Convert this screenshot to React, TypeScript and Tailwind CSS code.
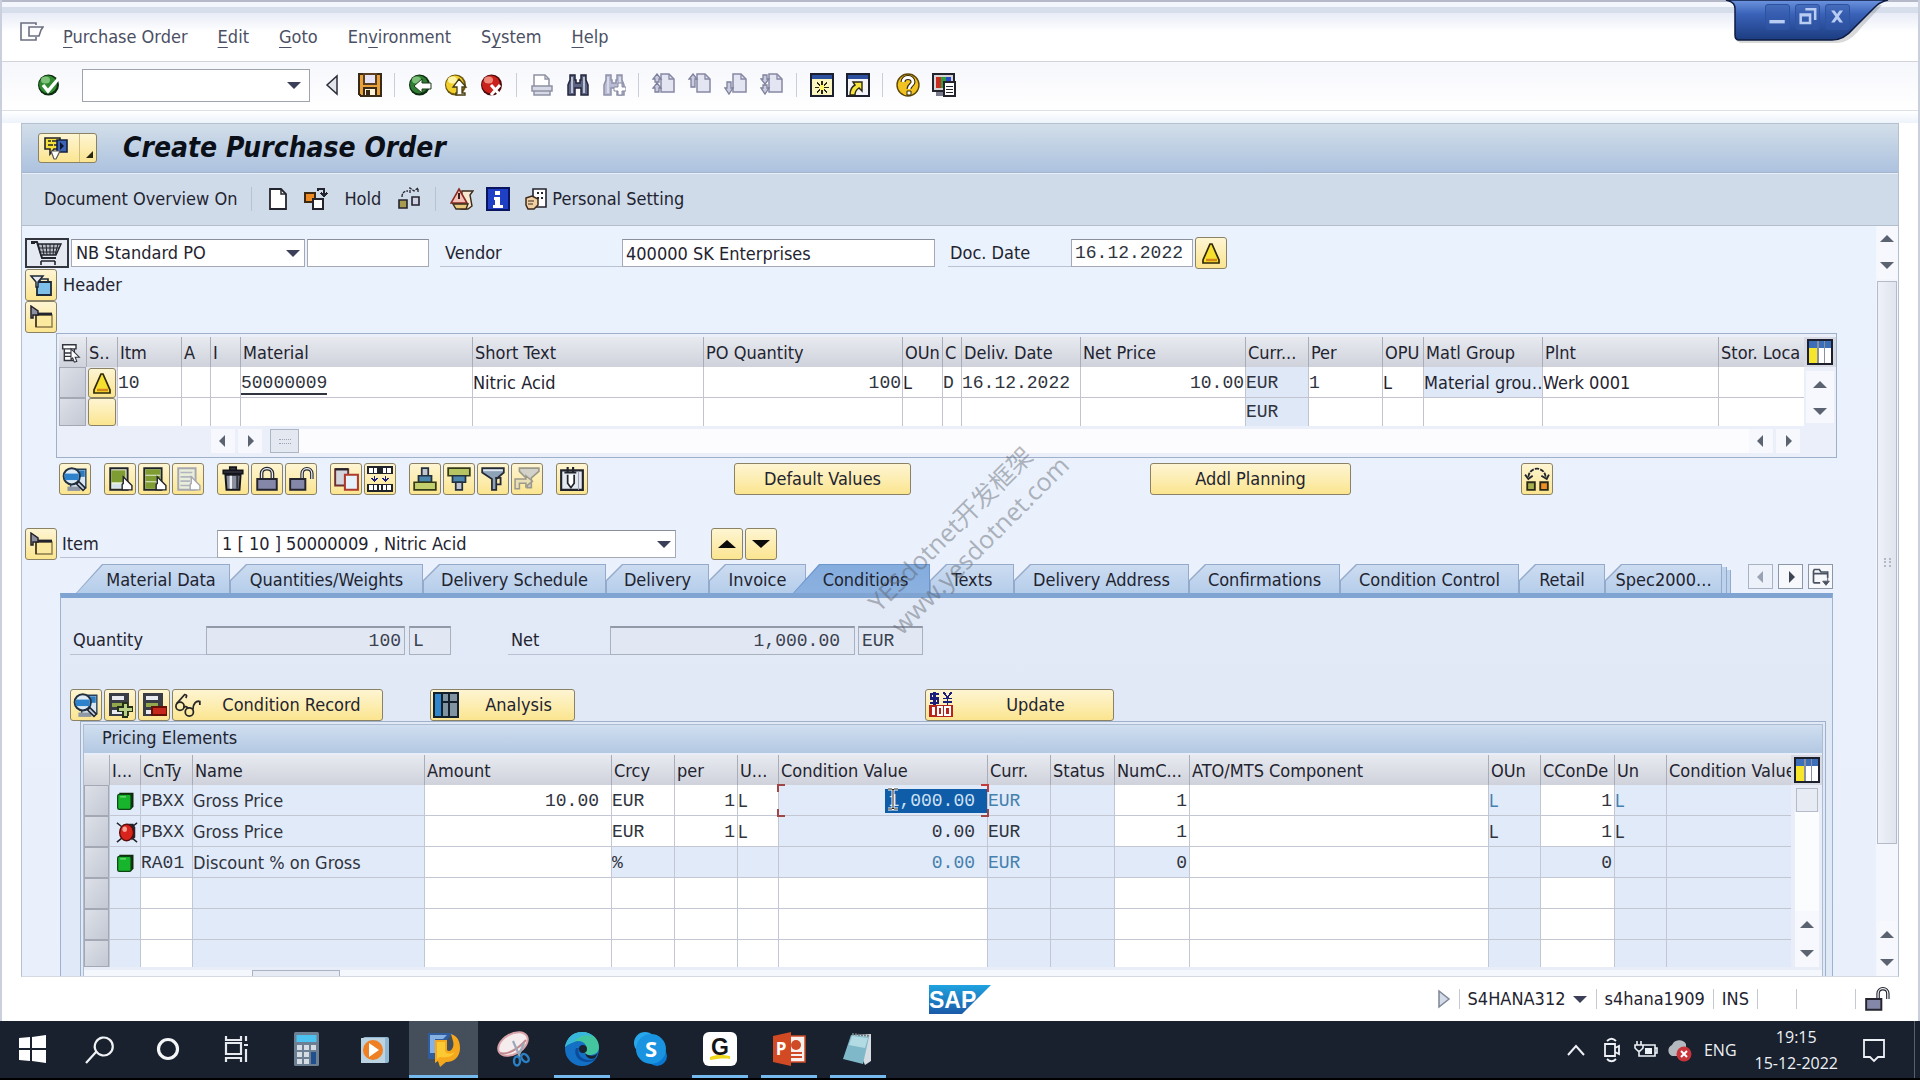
import React from "react";

type Kids = { children?: React.ReactNode };

/* ---------- drawing helpers ---------- */

function Ic({ s = 24, crisp = false, children }: Kids & { s?: number; crisp?: boolean }) {
  return (
    <svg width={s} height={s} viewBox="0 0 24 24" fill="none" shapeRendering={crisp ? "crispEdges" : "auto"} aria-hidden="true" className="block shrink-0">
      {children}
    </svg>
  );
}

function Orb({ base, hi, dark, children }: Kids & { base: string; hi: string; dark: string }) {
  return (
    <Ic>
      <circle cx="11.5" cy="12" r="10.5" fill={dark} />
      <circle cx="11" cy="11.5" r="9" fill={base} />
      <ellipse cx="8.5" cy="7" rx="4.5" ry="3.5" fill={hi} />
      {children}
    </Ic>
  );
}

const ExitDocIcon = () => (
  <Ic>
    <path d="M16 4V2H1v17h15v-3" stroke="#6b6f80" strokeWidth="1.6" />
    <path d="M9 6h14l-2 3-2 6H9z" stroke="#6b6f80" strokeWidth="1.6" />
  </Ic>
);
const OkIcon = () => (
  <Orb base="#2f8a2f" hi="#7fc37a" dark="#0c2b10">
    <path d="M6 12l5 6L22 5" stroke="#fff" strokeWidth="3.4" />
  </Orb>
);
const SaveIcon = () => (
  <Ic crisp>
    <path d="M1 1h22v22H3l-2-2z" fill="#e9a23b" stroke="#3a2a18" strokeWidth="1.6" />
    <path d="M6 1h12v10H6z" fill="#e6e3f7" stroke="#5a4020" strokeWidth="1.4" />
    <path d="M6 15h12v8H6z" fill="#fff4d8" stroke="#3a2a18" strokeWidth="1.4" />
    <path d="M8 17h4v6H8z" fill="#3a2a18" />
  </Ic>
);
const BackIcon = () => (
  <Orb base="#2f7d33" hi="#7cbf78" dark="#0c2b10">
    <path d="M6 13l8-7v4h9v6h-9v4z" fill="#fff" stroke="#1b3a1b" strokeWidth="1" />
  </Orb>
);
const UpIcon = () => (
  <Orb base="#f3cf2c" hi="#fff3a8" dark="#6a5510">
    <path d="M15 6l7 8h-4v6h3v2h-9v-2h1v-6H9z" fill="#fff" stroke="#443a10" strokeWidth="1.3" />
  </Orb>
);
const CancelIcon = () => (
  <Orb base="#c9211c" hi="#f0877b" dark="#4d0a0a">
    <path d="M11 12l9 10M20 12l-9 10" stroke="#fff" strokeWidth="3" />
  </Orb>
);
const PrintIcon = () => (
  <Ic>
    <path d="M4 13V2h11l4 4v7" fill="#fff" stroke="#8f91a3" strokeWidth="1.5" />
    <path d="M15 2v4h4" stroke="#8f91a3" strokeWidth="1.3" />
    <path d="M2 13h20v5H2zM4 18h16v4H4z" fill="#d6d8e6" stroke="#8f91a3" strokeWidth="1.5" />
  </Ic>
);
const Binoc = ({ a, b }: { a: string; b: string }) => (
  <g>
    <path d="M4 2h5v5h1v3h4V7h1V2h5v5l2 5v10h-7v-7h-6v7H2V12l2-5z" fill={a} stroke={b} strokeWidth="1.5" />
    <path d="M6 4v16M18 4v16" stroke="#e6e9f6" strokeWidth="1.4" />
  </g>
);
const FindIcon = () => <Ic><Binoc a="#5c6484" b="#23263c" /></Ic>;
const FindNextIcon = () => (
  <Ic>
    <Binoc a="#b9bcd2" b="#8e91a8" />
    <path d="M16 10h4v4h4v4h-4v4h-4v-4h-4v-4h4z" fill="#fff" stroke="#8486a0" strokeWidth="1" />
  </Ic>
);
function PageIcon({ arrows }: { arrows: string }) {
  return (
    <Ic>
      <path d="M9 1h8l5 5v13H9z" fill="#e4e5f3" stroke="#8688a4" strokeWidth="1.5" />
      <path d="M17 1v5h5" stroke="#8688a4" strokeWidth="1.3" />
      <path d={arrows} fill="#c9cbe0" stroke="#7f819c" strokeWidth="1.3" />
    </Ic>
  );
}
const SessionIcon = () => (
  <Ic crisp>
    <path d="M1 1h22v22H1z" fill="#fbf6c0" stroke="#1c1f2e" strokeWidth="2" />
    <path d="M2 2h20v4H2z" fill="#2c4f9e" />
    <path d="M12 8v13M5 14.500h14M7 9.500l10 10M17 9.500l-10 10" stroke="#2a2614" strokeWidth="1.300" />
    <circle cx="12" cy="14.500" r="2.500" fill="#fff56a" />
  </Ic>
);
const ShortcutIcon = () => (
  <Ic>
    <path d="M1 1h22v22H1z" fill="#f3f3f8" stroke="#1c1f2e" strokeWidth="2" />
    <path d="M2 2h20v4H2z" fill="#2c4f9e" />
    <path d="M4 22c0-5 1-8 5-10L7 9h9v9l-3-3c-3 2-4 4-4 7z" fill="#f5e33e" stroke="#2a2614" strokeWidth="1.4" />
  </Ic>
);
const HelpIcon = () => (
  <Ic>
    <circle cx="12" cy="12" r="11" fill="#f2c320" stroke="#5d4708" strokeWidth="1.4" />
    <path d="M7 9c0-6 10-6 10 0 0 3-4 3-4 7" stroke="#33280a" strokeWidth="5" />
    <path d="M7 9c0-6 10-6 10 0 0 3-4 3-4 7" stroke="#fff" strokeWidth="2.800" />
    <path d="M11 18h4v4h-4z" fill="#fff" stroke="#33280a" strokeWidth="1" />
  </Ic>
);
const LayoutIcon = () => (
  <Ic crisp>
    <path d="M1 1h21v17H1z" fill="#d5d5d5" stroke="#23232d" strokeWidth="2" />
    <path d="M4 4h5v11H4z" fill="#c92d22" /><path d="M9 4h5v11H9z" fill="#2f9e3d" /><path d="M14 4h5v11h-5z" fill="#2c46c8" />
    <path d="M4 19h12v4H4z" fill="#777b8c" />
    <path d="M12 9h11v14H12z" fill="#fff" stroke="#23232d" strokeWidth="1.500" />
    <path d="M14 13h7M14 16h7M14 19h7" stroke="#23232d" />
  </Ic>
);
const ServicesIcon = () => (
  <svg width="28" height="24" viewBox="0 0 28 24" aria-hidden="true" className="block">
    <path d="M2 2h15v11h-6l-4 5v-5H2z" fill="#f5e13c" stroke="#23232d" strokeWidth="1.600" />
    <path d="M5 5h3M9 5h5M5 9h5M11 9h3" stroke="#23232d" strokeWidth="1.600" />
    <path d="M14 4h10v12H14z" fill="#3c62b4" stroke="#15203f" strokeWidth="1.600" />
    <path d="M17 6l4 4-4 4z" fill="#0b1530" />
    <path d="M8 15h9l-4 8h-2z" fill="#fff" stroke="#555" strokeWidth="1.200" />
  </svg>
);
const NewDocIcon = () => (
  <Ic>
    <path d="M4 2h11l5 5v15H4z" fill="#fff" stroke="#24242e" strokeWidth="1.8" />
    <path d="M15 2v5h5" stroke="#24242e" strokeWidth="1.500" />
  </Ic>
);
const OtherPoIcon = () => (
  <Ic crisp>
    <path d="M1 6h10v9H1z" fill="#e98a25" stroke="#3d2812" strokeWidth="1.600" />
    <path d="M9 12h10v10H9z" fill="#fff" stroke="#24242e" strokeWidth="1.800" />
    <path d="M14 4V2h6v6M17 6l3 3 3-3" stroke="#24242e" strokeWidth="1.500" />
  </Ic>
);
const CheckConnIcon = () => (
  <Ic>
    <path d="M2 13h8v8H2z" fill="#a79b4f" stroke="#24242e" strokeWidth="1.600" />
    <path d="M15 10h7v8h-7z" fill="#cfd2e3" stroke="#24242e" strokeWidth="1.600" />
    <path d="M5 10c0-4 2-6 6-6M13 6V1l4 3 4-3v5" stroke="#24242e" strokeWidth="1.300" strokeDasharray="3 1" />
  </Ic>
);
const MessagesIcon = () => (
  <Ic>
    <path d="M12 4h11l-3 4 2 11-4 3h-7z" fill="#f6ead2" stroke="#3d2a1b" strokeWidth="1.400" />
    <path d="M9 2l8 14H1z" fill="#f5c1b8" stroke="#8a2a22" strokeWidth="1.600" />
    <path d="M9 6v6" stroke="#31201b" strokeWidth="2" />
    <path d="M3 17h15l-2 5H6z" fill="#e8c97e" stroke="#3d2a1b" strokeWidth="1.400" />
  </Ic>
);
const InfoIcon = () => (
  <Ic crisp>
    <path d="M1 1h22v22H1z" fill="#1f3fc4" stroke="#0a1560" strokeWidth="2" />
    <path d="M9 4h5v4H9zM8 10h6v8h3v3H7v-3h2v-5H8z" fill="#fff" />
  </Ic>
);
const PersonalIcon = () => (
  <Ic>
    <path d="M9 2h13v18H9z" fill="#fff" stroke="#24242e" strokeWidth="1.600" />
    <path d="M13 6h2M17 6h2M13 11h2M17 11h2" stroke="#24242e" strokeWidth="2" />
    <path d="M2 11l6-2 6 3v6l-4 4H4l-2-4z" fill="#f0cfa2" stroke="#3d2a1b" strokeWidth="1.500" />
    <path d="M4 14h6M4 17h5" stroke="#3d2a1b" />
  </Ic>
);
const CartIcon = () => (
  <svg width="34" height="26" viewBox="0 0 34 26" fill="none" aria-hidden="true" className="block">
    <path d="M2 2h5l5 16h14" stroke="#22242c" strokeWidth="2" />
    <path d="M8 4h23l-5 11H11z" fill="#b9bcc6" stroke="#22242c" strokeWidth="1.400" />
    <path d="M12 4l2 11M16 4l1 11M20 4v11M24 4l-1 11M28 4l-3 11M9 8h20M10 12h18" stroke="#22242c" />
    <path d="M11 21h14M11 21v4M25 21v4" stroke="#22242c" strokeWidth="1.600" />
    <path d="M1 1h4v3H1z" fill="#22242c" />
  </svg>
);
const HeaderOpenIcon = () => (
  <Ic>
    <path d="M8 9h14v13H8z" fill="#7fc0ea" stroke="#1d2a3a" strokeWidth="1.800" />
    <path d="M11 9V6h8v3" stroke="#1d2a3a" strokeWidth="1.600" />
    <path d="M2 3h12l-5 6v5H7V9z" fill="#e9e9ef" stroke="#1d2a3a" strokeWidth="1.500" />
  </Ic>
);
const FolderClosedIcon = () => (
  <Ic>
    <path d="M7 10h16v12H7z" fill="#fbe9a0" stroke="#8a7a4a" strokeWidth="1.400" />
    <path d="M7 22V9" stroke="#3b3320" strokeWidth="1.600" />
    <path d="M7 9h16" stroke="#23232d" strokeWidth="2.800" />
    <path d="M2 1l7 5v4H4v3H2z" fill="#8d909e" stroke="#23232d" strokeWidth="1.500" />
  </Ic>
);
const WarnIcon = () => (
  <Ic>
    <path d="M11 3h2l7 16v3H4v-3z" fill="#f7e02d" stroke="#2e2708" strokeWidth="1.700" />
    <path d="M7 19h11" stroke="#d5861a" strokeWidth="2.500" />
  </Ic>
);
const SelectAllIcon = () => (
  <Ic s={20}>
    <path d="M2 2h16v5H2zM4 7h12v14H4zM4 12h12M4 16h12" stroke="#32343f" strokeWidth="1.700" fill="#fff" />
    <path d="M12 7l10 10h-5l2 5-3 1-2-5-2 2z" fill="#fff" stroke="#32343f" strokeWidth="1.300" />
  </Ic>
);
const DetailIcon = () => (
  <Ic s={26}>
    <path d="M8 3h14v17H8z" fill="#d8e6f2" stroke="#27405c" strokeWidth="1.300" />
    <path d="M12 4h9v6h-9z" fill="#2b7bbf" />
    <path d="M5 19h12v4H5z" fill="#8e97a5" />
    <circle cx="9" cy="9.500" r="7.500" fill="#dceaf6" stroke="#23303f" strokeWidth="1.800" />
    <path d="M2.500 7h13v6h-13z" fill="#2d82cb" />
    <path d="M14 15l7 7" stroke="#1f2430" strokeWidth="4.500" />
    <path d="M15 16l5 5" stroke="#c6d8e8" strokeWidth="1.600" />
  </Ic>
);
const SheetIcon = ({ mode }: { mode: "one" | "many" | "off" }) => (
  <Ic s={26}>
    <path d="M3 2h16v20H3z" fill="#e9eeda" stroke={mode === "off" ? "#a6a7b0" : "#22242c"} strokeWidth="1.800" />
    {mode === "one" && <path d="M4 4h13v11H4z" fill="#7f9c33" />}
    {mode === "one" && <path d="M5 17h8v3H5z" fill="#cfe0f0" />}
    {mode === "many" && <path d="M4 3h14v5H4zM4 9h14v5H4zM4 15h10v6H4z" fill="#7f9c33" />}
    {mode === "off" && <path d="M5 6h11M5 10h11M5 14h9M5 18h9" stroke="#b3b5be" strokeWidth="1.500" />}
    <path d="M15 10l8 8v4h-9v-5l1-1z" fill="#fff" stroke={mode === "off" ? "#a6a7b0" : "#22242c"} strokeWidth="1.300" />
  </Ic>
);
const TrashIcon = () => (
  <Ic s={26}>
    <path d="M3 4h18v3H3zM9 1h6v3H9z" fill="#33353f" stroke="#15161c" strokeWidth="1.500" />
    <path d="M5 8h14l-1 14H6z" fill="#8b8e9d" stroke="#15161c" strokeWidth="1.800" />
    <path d="M10 9v12" stroke="#eceef5" strokeWidth="2.200" />
    <path d="M16 9v12" stroke="#33353f" strokeWidth="2" />
  </Ic>
);
const LockIcon = () => (
  <Ic s={26}>
    <path d="M7 12V7c0-6 10-6 10 0v5" stroke="#24252e" strokeWidth="3.400" />
    <path d="M7 12V7c0-6 10-6 10 0v5" stroke="#eceef5" strokeWidth="1.200" />
    <path d="M3 12h18v10H3z" fill="#8587a8" stroke="#24252e" strokeWidth="1.800" />
  </Ic>
);
const UnlockIcon = ({ s = 26 }: { s?: number }) => (
  <Ic s={s}>
    <path d="M13 12V7c0-6 9-6 9 0v5" stroke="#24252e" strokeWidth="3.200" />
    <path d="M13 12V7c0-6 9-6 9 0v5" stroke="#eceef5" strokeWidth="1.200" />
    <path d="M2 12h14v10H2z" fill="#8587a8" stroke="#24252e" strokeWidth="1.800" />
  </Ic>
);
const CopyIcon = () => (
  <Ic s={26}>
    <path d="M2 3h12v15H2z" fill="#d3d4dd" stroke="#6d3030" strokeWidth="1.800" />
    <path d="M2 3h12" stroke="#23232d" strokeWidth="2" />
    <path d="M11 8h12v14H11z" fill="#e6f2fb" stroke="#b03a2c" strokeWidth="1.900" />
  </Ic>
);
const BarsIcon = () => (
  <Ic s={26} crisp>
    <path d="M1 1h22v6H1zM1 17h22v6H1z" fill="#fff" stroke="#22242c" strokeWidth="1.600" />
    <path d="M6 1v6M18 1v6M6 17v6M10 17v6M14 17v6M18 17v6" stroke="#22242c" strokeWidth="1.600" />
    <path d="M9 1h6v6H9z" fill="#22242c" />
    <path d="M7 9v5M4 11l3 3 3-3M17 9v5M14 11l3 3 3-3" stroke="#1b1f7a" strokeWidth="1.600" />
  </Ic>
);
const SortAscIcon = () => (
  <Ic s={26}>
    <path d="M9 2h6v7H9z" fill="#c2c5d0" stroke="#23303f" strokeWidth="1.600" />
    <path d="M6 9h12v6H6z" fill="#4c86ac" stroke="#23303f" strokeWidth="1.600" />
    <path d="M2 15h20v7H2z" fill="#c3cf6d" stroke="#353b18" strokeWidth="1.600" />
  </Ic>
);
const SortDescIcon = () => (
  <Ic s={26}>
    <path d="M2 2h20v7H2z" fill="#b7c463" stroke="#353b18" strokeWidth="1.600" />
    <path d="M6 9h12v6H6z" fill="#4c86ac" stroke="#23303f" strokeWidth="1.600" />
    <path d="M9 15h6v7H9z" fill="#c2c5d0" stroke="#23303f" strokeWidth="1.600" />
  </Ic>
);
const FilterIcon = () => (
  <Ic s={26}>
    <path d="M2 2h20v4l-7 6v10h-4V12L2 6z" fill="#8fa3b8" stroke="#262a36" strokeWidth="1.600" />
    <path d="M3 4h18" stroke="#dfe6ee" strokeWidth="1.500" />
    <path d="M14 11h5v6h-4" stroke="#262a36" strokeWidth="1.700" />
  </Ic>
);
const FilterOffIcon = () => (
  <Ic s={26}>
    <path d="M5 2h18v3l-7 6v9h-4v-8L5 5z" fill="#d3d2c8" stroke="#9b998c" strokeWidth="1.500" />
    <path d="M1 12h10v-3l6 5-6 5v-3H5v5H1z" fill="#e8dfb6" stroke="#9b998c" strokeWidth="1.400" />
  </Ic>
);
const ClipIcon = () => (
  <Ic s={26}>
    <path d="M2 4h20v18H2z" fill="#e4e8f0" stroke="#22242c" strokeWidth="2" />
    <path d="M8 1v6M13 1v6M5 6h11" stroke="#22242c" strokeWidth="2" />
    <path d="M8 8v8l3 4 3-4V8" fill="#fff" stroke="#22242c" strokeWidth="1.600" />
    <path d="M18 5v17" stroke="#9aa0b4" />
  </Ic>
);
const ArcIcon = () => (
  <Ic s={26}>
    <path d="M3 15h7v7H3z" fill="#a8b04c" stroke="#2a2a18" strokeWidth="1.700" />
    <path d="M15 15h7v7h-7z" fill="#ef9023" stroke="#2a2a18" strokeWidth="1.700" />
    <path d="M4 10C5 0 19 0 20 10" stroke="#22242c" strokeWidth="1.700" strokeDasharray="4 1" />
    <path d="M1 8l3 4 4-3M16 9l5 3 2-4" stroke="#22242c" strokeWidth="1.700" />
  </Ic>
);
const RowPlusIcon = ({ minus = false }: { minus?: boolean }) => (
  <Ic s={26} crisp>
    <path d="M2 1h18v21H2z" fill="#3a3c46" />
    <path d="M5 4h11v3H5zM5 17h11v3H5z" fill="#e8eaf0" />
    <path d="M5 10h11v4H5z" fill="#93a84c" />
    {minus ? (
      <path d="M10 14h14v7H10z" fill="#c5271d" stroke="#641009" strokeWidth="1.400" />
    ) : (
      <path d="M15 10h4v4h5v4h-5v5h-4v-5h-5v-4h5z" fill="#b9cf86" stroke="#23301a" strokeWidth="1.400" />
    )}
  </Ic>
);
const GlassesIcon = () => (
  <Ic s={28}>
    <circle cx="6" cy="13" r="3.500" stroke="#262626" strokeWidth="1.500" />
    <circle cx="14" cy="18" r="3.500" stroke="#262626" strokeWidth="1.500" />
    <path d="M3 11l7-8c2 0 2 1 1 3M9 14c1-1 3-1 4 1M17 16c0-5 3-8 6-7v3" stroke="#262626" strokeWidth="1.500" />
  </Ic>
);
const AnalysisIcon = () => (
  <Ic s={26} crisp>
    <path d="M1 1h22v22H1z" fill="#7f93a0" stroke="#14202c" strokeWidth="2" />
    <path d="M2 2h6v20H2z" fill="#2f86cd" />
    <path d="M8 1v22M15 1v22M8 9h15" stroke="#14202c" strokeWidth="1.800" />
  </Ic>
);
const UpdateIcon = () => (
  <Ic s={26} crisp>
    <path d="M1 12h22v11H1z" fill="#b8231c" />
    <path d="M5 14v7M9 14h4v7H9zM16 14h4v7h-4z" stroke="#fff" strokeWidth="2" />
    <path d="M10 2H3v4h6v4H2M6 0v12" stroke="#1b1f7a" strokeWidth="2" />
    <path d="M14 0l4 5 4-5M18 5v7M14 6h8M14 9h8" stroke="#1b1f7a" strokeWidth="1.800" />
  </Ic>
);
const ConfigIcon = () => (
  <Ic s={26} crisp>
    <path d="M1 1h22v22H1z" fill="#fff" stroke="#1c1f2e" strokeWidth="2" />
    <path d="M2 2h20v6H2z" fill="#3c6fb8" />
    <path d="M2 8h7v14H2z" fill="#f7e52c" />
    <path d="M10 2v20M16 2v20" stroke="#8a909e" strokeWidth="1.500" />
  </Ic>
);
const ListBtnIcon = () => (
  <Ic s={20}>
    <path d="M3 19V5l1-2h6l2 3h8v7" stroke="#4a5160" strokeWidth="2" />
    <path d="M3 8h17M3 19h8" stroke="#4a5160" strokeWidth="2" />
    <path d="M20 12v5M14 17h8l-4 5z" fill="#4a5160" stroke="#4a5160" />
  </Ic>
);
const GreenBox = () => (
  <Ic s={20}>
    <path d="M4 2h17v17l-3 3H4z" fill="#12290f" />
    <rect x="2" y="4" width="16" height="18" rx="2" fill="#17b52b" stroke="#0c4513" strokeWidth="1.500" />
    <path d="M5 7h7" stroke="#5fd468" strokeWidth="2" />
  </Ic>
);
const RedFlash = () => (
  <Ic s={22}>
    <path d="M1 2l5 4M23 2l-5 4M1 23l5-4M23 23l-5-4" stroke="#22242c" strokeWidth="1.600" />
    <path d="M12 3h7l2 4v11l-4 3z" fill="#22242c" />
    <ellipse cx="11.500" cy="12.500" rx="7.500" ry="9" fill="#d8241c" stroke="#5b0d0a" strokeWidth="1.500" />
    <ellipse cx="9.500" cy="9" rx="2.500" ry="3" fill="#f7a195" />
  </Ic>
);

type Dir = "up" | "down" | "left" | "right";
const dirPath: Record<Dir, string> = { up: "M1 10h14L8 3z", down: "M1 4h14L8 11z", left: "M10 1v12L4 7z", right: "M6 1v12l6-6z" };
const Tri = ({ d, c = "#5b6370" }: { d: Dir; c?: string }) => (
  <svg width="16" height="14" viewBox="0 0 16 14" aria-hidden="true" className="block shrink-0"><path d={dirPath[d]} fill={c} /></svg>
);

/* ---------- controls ---------- */

function YBtn({ label, className = "w-8", children }: Kids & { label?: string; className?: string }) {
  return (
    <button type="button" aria-label={label} className={`flex h-8 shrink-0 items-center justify-center rounded-[3px] border border-[#8b8266] bg-linear-to-b from-[#fef5d2] to-[#fbe58f] ${className}`}>
      {children}
    </button>
  );
}
function ArrowBtn({ d, label, className = "h-6 w-6" }: { d: Dir; label: string; className?: string }) {
  return <button type="button" aria-label={label} className={`flex shrink-0 items-center justify-center bg-[#f6f8fd] ${className}`}><Tri d={d} /></button>;
}
function IconBtn({ label, children }: Kids & { label: string }) {
  return <button type="button" aria-label={label} className="shrink-0">{children}</button>;
}
const Sep = () => <span className="mr-px h-6 w-px bg-[#c9ced8]" />;
function Combo({ id, label, value, className }: { id: string; label: string; value: string; className: string }) {
  return (
    <span className={`relative shrink-0 ${className}`}>
      <select id={id} aria-label={label} className="h-full w-full appearance-none border border-[#a4a9b4] border-t-[#8a8f9b] bg-white pl-1 outline-none">
        <option>{value}</option>
      </select>
      <span className="pointer-events-none absolute top-1/2 right-1 -translate-y-1/2"><Tri d="down" c="#3b4058" /></span>
    </span>
  );
}
const field = "h-7 shrink-0 border border-[#a4a9b4] border-t-[#8a8f9b] bg-white px-[3px] outline-none";
const roField = "h-[29px] shrink-0 border border-[#a9b1bf] border-t-2 border-t-[#9299a8] bg-[#e2e8f3] px-[3px] outline-none font-['Liberation_Mono',monospace] text-[18px] text-[#3a4150]";
const mono = "font-['Liberation_Mono',monospace] text-[18px] text-[#30343e]";
const under = "flex shrink-0 items-center border-b border-[#b9c2d2]";

/* ---------- data ---------- */

const menus: [string, string, string][] = [["", "P", "urchase Order"], ["", "E", "dit"], ["", "G", "oto"], ["En", "v", "ironment"], ["S", "y", "stem"], ["", "H", "elp"]];

const itemCols: [string, string][] = [
  ["w-[27px]", ""], ["w-[31px]", "S.."], ["w-[64px]", "Itm"], ["w-[29px]", "A"], ["w-[30px]", "I"], ["w-[232px]", "Material"], ["w-[231px]", "Short Text"],
  ["w-[199px]", "PO Quantity"], ["w-[40px]", "OUn"], ["w-[19px]", "C"], ["w-[119px]", "Deliv. Date"], ["w-[165px]", "Net Price"], ["w-[63px]", "Curr..."],
  ["w-[74px]", "Per"], ["w-[41px]", "OPU"], ["w-[119px]", "Matl Group"], ["w-[176px]", "Plnt"], ["", "Stor. Loca"],
];
const itemRows: string[][] = [
  ["", "", "10", "", "", "50000009", "Nitric Acid", "100", "L", "D", "16.12.2022", "10.00", "EUR", "1", "L", "Material grou…", "Werk 0001", ""],
  ["", "", "", "", "", "", "", "", "", "", "", "", "EUR", "", "", "", "", ""],
];
const itemMono = [2, 5, 7, 9, 10, 11, 12, 13];

const condCols: [string, string][] = [
  ["w-[25px]", ""], ["w-[31px]", "I..."], ["w-[52px]", "CnTy"], ["w-[232px]", "Name"], ["w-[187px]", "Amount"], ["w-[63px]", "Crcy"], ["w-[63px]", "per"],
  ["w-[41px]", "U..."], ["w-[209px]", "Condition Value"], ["w-[63px]", "Curr."], ["w-[64px]", "Status"], ["w-[75px]", "NumC..."], ["w-[299px]", "ATO/MTS Component"],
  ["w-[52px]", "OUn"], ["w-[74px]", "CConDe"], ["w-[52px]", "Un"], ["", "Condition Value"],
];
const condRows: string[][] = [
  ["", "ok", "PBXX", "Gross Price", "10.00", "EUR", "1", "L", "1,000.00", "EUR", "", "1", "", "L", "1", "L", ""],
  ["", "bad", "PBXX", "Gross Price", "", "EUR", "1", "L", "0.00", "EUR", "", "1", "", "L", "1", "L", ""],
  ["", "ok", "RA01", "Discount % on Gross", "", "%", "", "", "0.00", "EUR", "", "0", "", "", "0", "", ""],
  Array(17).fill(""), Array(17).fill(""), Array(17).fill(""),
];
const condMono = [2, 4, 5, 6, 8, 9, 11, 14];
const condRight = [4, 6, 8, 11, 14];

function condShaded(r: number, c: number) {
  if ([1, 3, 9, 10, 13, 15, 16].includes(c)) return true;
  if (r < 3 && [2, 8].includes(c)) return true;
  return r === 2 && [5, 6, 7, 11, 14].includes(c);
}

const tabs: [string, string][] = [
  ["w-[154px]", "Material Data"], ["w-[193px]", "Quantities/Weights"], ["w-[183px]", "Delivery Schedule"], ["w-[103px]", "Delivery"], ["w-[97px]", "Invoice"],
  ["w-[137px]", "Conditions"], ["w-[84px]", "Texts"], ["w-[175px]", "Delivery Address"], ["w-[151px]", "Confirmations"], ["w-[179px]", "Condition Control"],
  ["w-[86px]", "Retail"], ["w-[117px]", "Spec2000..."],
];

/* ---------- sections ---------- */

function WindowControls() {
  return (
    <div className="absolute top-0 right-6 h-11 w-[170px]">
      <svg width="170" height="44" viewBox="0 0 170 44" fill="none" aria-hidden="true" className="absolute inset-0">
        <defs>
          <linearGradient id="wc" x1="0" y1="0" x2="0" y2="1"><stop offset="0" stopColor="#6d95df" /><stop offset=".35" stopColor="#3a62b8" /><stop offset="1" stopColor="#1c3c80" /></linearGradient>
        </defs>
        <path d="M8 2c4 2 4 6 4 8v26c0 5 2 7 6 7h94c10 0 18-6 24-14l22-24z" fill="#00000026" />
        <path d="M2 0c8 2 9 5 9 9v26c0 3 1 5 4 5h93c10 0 16-5 21-11l22-22c4-4 8-6 13-7z" fill="url(#wc)" stroke="#0d1b40" strokeWidth="1.500" />
      </svg>
      <div className="absolute top-1 left-[41px] flex gap-[5px]">
        {["M4 17h18v4H4z", "M11 3h13v14h-3V6H11zM4 9h14v13H4zm3 4v6h8v-6z", "M6 6h4l3 4 3-4h4l-5 7 5 7h-4l-3-4-3 4H6l5-7z"].map((d, i) => (
          <button key={i} type="button" aria-label={["Minimize", "Restore", "Close"][i]} className="h-[26px] w-[25px] rounded-[3px] border border-[#2c52a0] bg-[#3158a880]">
            <svg width="23" height="24" viewBox="0 0 27 27" fill="#b9cdf2" fillRule="evenodd" aria-hidden="true"><path d={d} /></svg>
          </button>
        ))}
      </div>
    </div>
  );
}

function Toolbar() {
  return (
    <div className="flex h-[49px] items-center border-b border-[#dcdfe6] bg-linear-to-b from-[#f6f7fc] to-white pb-[2px] pl-[35px]">
      <IconBtn label="Enter"><OkIcon /></IconBtn>
      <span className="relative ml-[21px] h-[33px] w-[228px] shrink-0">
        <input aria-label="Command" className="h-full w-full border border-[#9ea3ae] bg-white pr-7 pl-1 outline-none" />
        <button type="button" aria-label="Command history" className="absolute top-1/2 right-2 -translate-y-1/2"><Tri d="down" c="#3b4058" /></button>
      </span>
      <button type="button" aria-label="Collapse" className="ml-[15px]">
        <svg width="14" height="22" viewBox="0 0 14 22" aria-hidden="true"><path d="M12 2v18L2 11z" fill="#e3e5ec" stroke="#2c2f3a" strokeWidth="1.500" /></svg>
      </button>
      <div className="ml-[19px] flex items-center gap-3">
        <IconBtn label="Save"><SaveIcon /></IconBtn><Sep />
        <IconBtn label="Back"><BackIcon /></IconBtn><IconBtn label="Exit"><UpIcon /></IconBtn><IconBtn label="Cancel"><CancelIcon /></IconBtn><Sep />
        <IconBtn label="Print"><PrintIcon /></IconBtn><IconBtn label="Find"><FindIcon /></IconBtn><IconBtn label="Find next"><FindNextIcon /></IconBtn><Sep />
        <IconBtn label="First page"><PageIcon arrows="M5 1l4 5H7v3H3V6H1zM5 10l4 5H7v4H3v-4H1z" /></IconBtn>
        <IconBtn label="Previous page"><PageIcon arrows="M5 1l4 5H7v8H3V6H1z" /></IconBtn>
        <IconBtn label="Next page"><PageIcon arrows="M3 9h4v6h2l-4 6-4-6h2z" /></IconBtn>
        <IconBtn label="Last page"><PageIcon arrows="M3 2h4v4h2l-4 5-4-5h2zM3 12h4v3h2l-4 6-4-6h2z" /></IconBtn><Sep />
        <IconBtn label="New session"><SessionIcon /></IconBtn><IconBtn label="Create shortcut"><ShortcutIcon /></IconBtn><Sep />
        <IconBtn label="Help"><HelpIcon /></IconBtn><IconBtn label="Customize layout"><LayoutIcon /></IconBtn>
      </div>
    </div>
  );
}

function HeadCell({ children, className = "" }: Kids & { className?: string }) {
  return (
    <th className={`overflow-hidden border-l border-[#a8adb9] bg-linear-to-b from-[#e8eaf0] to-[#cfd2db] pt-[2px] pl-[2px] text-left font-normal whitespace-nowrap first:border-l-0 ${className}`}>
      {children}
    </th>
  );
}

const rowHead = "border border-[#a3a8b4] bg-linear-to-br from-[#dde0e8] to-[#c3c8d3]";

function ItemTable() {
  return (
    <div className="ml-[31px] border border-[#9fb1c9] bg-[#eaeffa] pt-[3px] pb-1 pl-[2px]">
      <div className="flex">
        <table className="w-full min-w-0 flex-1 table-fixed border-separate border-spacing-0">
          <thead>
            <tr className="h-[30px]">
              {itemCols.map(([w, t], i) => <HeadCell key={i} className={w}>{i === 0 ? <SelectAllIcon /> : t}</HeadCell>)}
            </tr>
          </thead>
          <tbody>
            {itemRows.map((row, r) => (
              <tr key={r} className={r === 0 ? "h-[31px]" : "h-7"}>
                {row.map((v, c) => {
                  if (c === 0) return <td key={c} className={rowHead} />;
                  if (c === 1)
                    return (
                      <td key={c} className="bg-[#e6e8ee] p-0">
                        <button type="button" aria-label={r === 0 ? "Item warning" : "Item status"} className={`ml-[2px] flex w-[28px] items-center justify-center rounded-[3px] border border-[#8b8266] bg-linear-to-b from-[#fef5d2] to-[#fbe58f] ${r === 0 ? "h-[30px]" : "h-7"}`}>
                          {r === 0 && <WarnIcon />}
                        </button>
                      </td>
                    );
                  const right = c === 7 || c === 11;
                  const shade = c === 12 || (c === 15 && r === 0);
                  return (
                    <td key={c} className={`overflow-hidden border-l border-[#c3c4cf] p-0 whitespace-nowrap ${r === 0 ? "border-b pt-px" : ""} ${shade ? "bg-[#dfe8f7]" : "bg-white"} ${right ? "pr-px text-right" : ""} ${itemMono.includes(c) ? mono : ""}`}>
                      {c === 5 && v ? <a href="#material" className="border-b-2 border-[#30343e]">{v}</a> : v}
                    </td>
                  );
                })}
              </tr>
            ))}
          </tbody>
        </table>
        <div className="flex w-8 shrink-0 flex-col items-center">
          <button type="button" aria-label="Table settings" className="flex h-[30px] w-full items-center justify-center bg-[#d6d9e1]"><ConfigIcon /></button>
          <ArrowBtn d="up" label="Scroll items up" className="mt-1 h-7 w-7" />
          <ArrowBtn d="down" label="Scroll items down" className="h-6 w-7" />
        </div>
      </div>
      <div className="mt-[3px] flex h-6 items-center pr-9 pl-[152px]">
        <ArrowBtn d="left" label="Scroll left" />
        <ArrowBtn d="right" label="Scroll right" className="ml-[3px] h-6 w-6" />
        <span className="ml-2 grid h-6 w-[29px] shrink-0 place-items-center border border-[#aeb6c4] bg-[#e3e8f1]">
          <span className="h-[5px] w-3 border-y border-dotted border-[#9aa3b3]" />
        </span>
        <span className="h-6 flex-1 bg-[#fcfcfe]" />
        <ArrowBtn d="left" label="Previous column" />
        <ArrowBtn d="right" label="Next column" className="ml-[3px] h-6 w-6" />
      </div>
    </div>
  );
}

function ItemActions() {
  return (
    <div className="mt-[5px] ml-[34px] flex items-center">
      <div className="flex gap-[13px]">
        <YBtn label="Item detail"><DetailIcon /></YBtn>
        <div className="flex gap-[2px]"><YBtn label="Select all"><SheetIcon mode="one" /></YBtn><YBtn label="Select block"><SheetIcon mode="many" /></YBtn><YBtn label="Deselect"><SheetIcon mode="off" /></YBtn></div>
        <div className="flex gap-[2px]"><YBtn label="Delete"><TrashIcon /></YBtn><YBtn label="Lock"><LockIcon /></YBtn><YBtn label="Unlock"><UnlockIcon /></YBtn></div>
        <div className="flex gap-[2px]"><YBtn label="Copy"><CopyIcon /></YBtn><YBtn label="Duplicate"><BarsIcon /></YBtn></div>
        <div className="flex gap-[2px]"><YBtn label="Sort ascending"><SortAscIcon /></YBtn><YBtn label="Sort descending"><SortDescIcon /></YBtn><YBtn label="Filter"><FilterIcon /></YBtn><YBtn label="Delete filter"><FilterOffIcon /></YBtn></div>
        <YBtn label="Attachments"><ClipIcon /></YBtn>
      </div>
      <YBtn className="ml-[146px] w-[177px]">Default Values</YBtn>
      <YBtn className="ml-[239px] w-[201px]">Addl Planning</YBtn>
      <YBtn label="Assign" className="ml-[170px] w-8"><ArcIcon /></YBtn>
    </div>
  );
}

const tabShape = (i: number) =>
  i === 0 || i === 5
    ? "[clip-path:polygon(0_100%,26px_0,100%_0,100%_100%)]"
    : "[clip-path:polygon(0_100%,0_16px,16px_0,100%_0,100%_100%)]";

function TabStrip() {
  return (
    <div className="mt-1 ml-[35px] flex h-[29px] items-start pr-[43px]">
      <div role="tablist" className="ml-4 flex h-full">
        {tabs.map(([w, t], i) => {
          const active = i === 5;
          return (
            <button key={t} type="button" role="tab" aria-selected={active} className={`relative flex h-full shrink-0 pt-px ${w} ${tabShape(i)} ${active ? "-ml-[13px] bg-[#6d96cc]" : "bg-[#93aacb]"}`}>
              <span className={`mr-px ml-px flex h-full flex-1 items-center justify-center pt-[2px] whitespace-nowrap ${tabShape(i)} ${active ? "bg-linear-to-b from-[#84acdd] to-[#8bb1e0] pl-2" : "bg-linear-to-b from-[#ccdcf1] to-[#b5cdea]"} ${i === 0 ? "pl-4" : ""}`}>{t}</span>
            </button>
          );
        })}
        <span className="mt-[3px] w-[5px] border-r border-[#93aacb] bg-[#bdd2ec]" />
        <span className="mt-[6px] w-1 border-r border-[#93aacb] bg-[#bdd2ec]" />
      </div>
      <div className="ml-auto flex gap-[5px]">
        <button type="button" aria-label="Previous tabs" className="grid h-[25px] w-[25px] place-items-center border border-[#a9b3c4] bg-[#edf1f9]"><Tri d="left" c="#9aa3b3" /></button>
        <button type="button" aria-label="Next tabs" className="grid h-[25px] w-[25px] place-items-center border border-[#8c97aa] bg-[#f6f8fc]"><Tri d="right" c="#3d4452" /></button>
        <button type="button" aria-label="Tab list" className="grid h-[25px] w-[25px] place-items-center border border-[#8c97aa] bg-[#f6f8fc]"><ListBtnIcon /></button>
      </div>
    </div>
  );
}

function ConditionTable() {
  return (
    <div className="flex">
      <table className="w-full min-w-0 flex-1 table-fixed border-separate border-spacing-0">
        <thead>
          <tr className="h-[30px]">{condCols.map(([w, t], i) => <HeadCell key={i} className={w}>{t}</HeadCell>)}</tr>
        </thead>
        <tbody>
          {condRows.map((row, r) => (
            <tr key={r} className={r === 5 ? "h-[27px]" : "h-[31px]"}>
              {row.map((v, c) => {
                if (c === 0) return <td key={c} className={rowHead} />;
                const blue = r !== 1 && [8, 9, 13, 15].includes(c);
                const focus = r === 0 && c === 8;
                return (
                  <td key={c} className={`border-l border-[#c3c6d3] p-0 pt-px whitespace-nowrap ${r < 5 ? "border-b" : ""} ${focus ? "relative" : "overflow-hidden"} ${condShaded(r, c) ? "bg-[#e1eaf8]" : "bg-white"} ${condRight.includes(c) ? "text-right" : ""} ${condMono.includes(c) ? "font-['Liberation_Mono',monospace] text-[18px]" : ""} ${blue ? "text-[#4580ae]" : "text-[#30343e]"} ${c === 4 || c === 8 ? "pr-3" : "pr-[2px]"}`}>
                    {c === 1 && v ? <span className="ml-[6px] flex">{v === "ok" ? <GreenBox /> : <RedFlash />}</span> : focus ? (
                      <>
                        <span className="-mr-3 inline-block bg-[#0f5ca8] pr-3 pl-1 leading-6 text-[#cfe2f5]">{v}</span>
                        <svg width="14" height="24" viewBox="0 0 14 24" fill="none" aria-hidden="true" className="absolute top-[2px] right-[87px]">
                          <path d="M2 2h4l1 1 1-1h4M7 3v18M2 22h4l1-1 1 1h4" stroke="#fff" strokeWidth="3" />
                          <path d="M2 2h4l1 1 1-1h4M7 3v18M2 22h4l1-1 1 1h4" stroke="#222" strokeWidth="1" />
                        </svg>
                        <span className="absolute -top-px -left-[2px] h-2 w-2 border-t-2 border-l-2 border-[#a04646]" />
                        <span className="absolute -top-px -right-[2px] h-2 w-2 border-t-2 border-r-2 border-[#c23a3a]" />
                        <span className="absolute -bottom-[2px] -left-[2px] h-2 w-2 border-b-2 border-l-2 border-[#a04646]" />
                        <span className="absolute -right-[2px] -bottom-[2px] h-2 w-2 border-r-2 border-b-2 border-[#a04646]" />
                      </>
                    ) : v}
                  </td>
                );
              })}
            </tr>
          ))}
        </tbody>
      </table>
      <div className="flex w-[31px] shrink-0 flex-col items-center bg-[#e8edf7]">
        <button type="button" aria-label="Condition table settings" className="flex h-[30px] w-full items-center justify-center bg-[#d6d9e1]"><ConfigIcon /></button>
        <span className="mt-[3px] h-6 w-[22px] shrink-0 border border-[#b4bac8] bg-[#e7ebf4]" />
        <span className="w-6 flex-1 bg-[#fbfcfe]" />
        <ArrowBtn d="up" label="Scroll conditions up" className="h-7 w-6" />
        <ArrowBtn d="down" label="Scroll conditions down" className="h-7 w-6" />
      </div>
    </div>
  );
}

function ConditionsPanel() {
  return (
    <div className="mr-[43px] ml-[35px] flex flex-1 flex-col border-x border-t-[5px] border-x-[#9db3d4] border-t-[#7fa4d1] bg-linear-to-b from-[#e2e9f7] to-[#dfe9f8] pt-7">
      <div className="flex pl-[9px]">
        <label htmlFor="qty" className={`${under} w-[136px] pl-[3px]`}>Quantity</label>
        <input id="qty" readOnly defaultValue="100" className={`${roField} w-[199px] text-right`} />
        <input aria-label="Quantity unit" readOnly defaultValue="L" className={`${roField} ml-1 w-[42px]`} />
        <label htmlFor="net" className={`${under} ml-[57px] w-[102px] pl-[3px]`}>Net</label>
        <input id="net" readOnly defaultValue="1,000.00" className={`${roField} w-[245px] pr-[14px] text-right`} />
        <input aria-label="Net currency" readOnly defaultValue="EUR" className={`${roField} ml-[3px] w-[65px]`} />
      </div>
      <div className="mt-[34px] flex pl-[9px]">
        <div className="flex gap-[2px]">
          <YBtn label="Condition detail"><DetailIcon /></YBtn>
          <YBtn label="Insert row"><RowPlusIcon /></YBtn>
          <YBtn label="Delete row"><RowPlusIcon minus /></YBtn>
          <YBtn className="w-[211px]"><GlassesIcon /><span className="flex-1">Condition Record</span></YBtn>
        </div>
        <YBtn className="ml-[47px] w-[145px] pl-[2px]"><AnalysisIcon /><span className="flex-1 pl-1">Analysis</span></YBtn>
        <YBtn className="ml-[350px] w-[189px] pl-[2px]"><UpdateIcon /><span className="flex-1 pl-1">Update</span></YBtn>
      </div>
      <div className="mr-[6px] ml-[19px] flex-1 border-x border-t border-[#9fb1c9] px-[2px] pt-[2px]">
        <div className="border border-b-0 border-[#aebcd0]">
          <h2 className="h-7 bg-linear-to-b from-[#d0dff0] to-[#b3c8e2] pl-[18px] leading-[26px]">Pricing Elements</h2>
          <div className="bg-[#e8edf7] pt-[2px]">
            <ConditionTable />
            <div className="mt-[3px] flex h-[6px] bg-[#f4f7fc] pl-[168px]">
              <span className="w-[88px] border-x border-t border-[#a9b3c4] bg-[#e6ebf4]" />
            </div>
          </div>
        </div>
      </div>
    </div>
  );
}

function StatusBar() {
  const sep = <span className="h-5 w-px bg-[#c6c9d2]" />;
  return (
    <footer className="grid h-11 shrink-0 grid-cols-[1fr_auto_1fr] items-center">
      <span />
      <svg width="62" height="29" viewBox="0 0 62 29" role="img" aria-label="SAP" className="block">
        <defs><linearGradient id="sap" x1="0" y1="0" x2="0" y2="1"><stop offset="0" stopColor="#1fa3e0" /><stop offset="1" stopColor="#1b5aa8" /></linearGradient></defs>
        <path d="M0 0h62L33 29H0z" fill="url(#sap)" />
        <text x="0" y="23" fontFamily="Liberation Sans, sans-serif" fontWeight="700" fontSize="23" fill="#fff">SAP</text>
      </svg>
      <div className="flex items-center justify-end pr-7">
        <svg width="14" height="20" viewBox="0 0 14 20" aria-hidden="true" className="mr-2"><path d="M2 2v16l10-8z" fill="#d3dbe8" stroke="#7e8797" strokeWidth="1.500" /></svg>
        {sep}
        <button type="button" className="flex items-center gap-[6px] px-2">S4HANA312 <Tri d="down" c="#3b4058" /></button>
        {sep}
        <span className="px-2">s4hana1909</span>
        {sep}
        <span className="px-2">INS</span>
        {sep}<span className="w-[38px]" />{sep}<span className="w-[58px]" />{sep}
        <span className="ml-2"><UnlockIcon /></span>
      </div>
    </footer>
  );
}

const taskIcons: { name: string; state?: "active" | "running"; art: React.ReactNode }[] = [
  { name: "Start", art: <path d="M7 9l11-1v11H7zM20 8l14-2v13H20zM7 21h11v11L7 31zM20 21h14v13l-14-2z" fill="#fff" /> },
  { name: "Search", art: <path d="M17 23L7 34M17 13a9 9 0 1 1 0 9 9 9 0 0 1 0-9z" fill="none" stroke="#f0f2f5" strokeWidth="2.200" /> },
  { name: "Cortana", art: <circle cx="20" cy="20" r="9.500" fill="none" stroke="#f5f6f8" strokeWidth="3.200" /> },
  { name: "Task view", art: <path d="M9 7v4h15V7M9 33v-4h15v4M9 14h15v11H9zM29 7v5M29 20v13M27 16h4" fill="none" stroke="#e6e9ee" strokeWidth="2.200" /> },
  {
    name: "Calculator",
    art: (
      <g><rect x="8" y="3" width="25" height="34" rx="1.500" fill="#6d7f93" /><rect x="10.500" y="6" width="20" height="7" fill="#4cc2f1" />
        <path d="M11 16h5v5h-5zM18 16h5v5h-5zM25 16h5v5h-5zM11 23h5v5h-5zM18 23h5v5h-5zM11 30h5v5h-5zM18 30h5v5h-5z" fill="#d5dce4" /><path d="M25 23h5v12h-5z" fill="#1f4f8c" /></g>
    ),
  },
  { name: "Media player", art: <g><rect x="8" y="8" width="26" height="26" rx="2" fill="#8fb6d2" /><rect x="6" y="9" width="24" height="25" fill="#bcd3e2" /><circle cx="18" cy="21" r="10" fill="#ee7f22" /><path d="M14 14v14l10-7z" fill="#fff" /></g> },
  {
    name: "SAP Logon",
    state: "active",
    art: (
      <g><path d="M4 4h24l-5 7H13v19H4z" fill="#2f5d9e" /><path d="M6 6h17l-4 4h-8v14H6z" fill="#86b1e2" />
        <path d="M11 11h12v10c3 3 8-2 6-9l-2-7c7 2 9 8 9 14 0 8-5 14-14 14l-6 5-2-6-3 2z" fill="#f6a81c" /><path d="M13 13h8v9c2 4 7 3 10 1-3 5-9 6-15 5l-3 2z" fill="#fbc934" /></g>
    ),
  },
  {
    name: "Snipping Tool",
    art: (
      <g><ellipse cx="20" cy="15" rx="16" ry="10" transform="rotate(-30 20 15)" fill="#f5ecee" stroke="#d9a3a9" strokeWidth="2" /><path d="M7 24c7 2 17-3 26-13" fill="none" stroke="#c08a8f" strokeWidth="2" />
        <path d="M20 12l7 16M31 14l-6 14" stroke="#9aa9b9" strokeWidth="2.200" /><ellipse cx="24" cy="32" rx="3" ry="4.500" fill="none" stroke="#2c7fc2" strokeWidth="2.400" /><ellipse cx="32" cy="29" rx="3" ry="4.500" transform="rotate(-40 32 29)" fill="none" stroke="#2c7fc2" strokeWidth="2.400" /></g>
    ),
  },
  {
    name: "Edge",
    state: "running",
    art: (
      <g><circle cx="20" cy="20" r="17" fill="#1470c4" /><path d="M3 18C5 8 12 3 20 3c10 0 17 7 17 15 0 6-5 8-9 8-5 0-6-2-5-4 4-7-4-12-11-9C8 14 5 16 3 18z" fill="#43c6a0" /><path d="M3 18C5 8 12 3 20 3c5 0 9 2 12 5-8-3-16-1-20 5-4 1-7 3-9 5z" fill="#38b6dc" />
        <path d="M14 19c-3 7 3 14 11 14 4 0 7-1 9-4-4 3-12 3-16-2-2-3-2-6-1-8z" fill="#0b4c9c" /><circle cx="21" cy="20" r="4" fill="#1a2230" /><path d="M23 24c4 4 10 3 13 0l-3 5c-4 2-9 0-10-5z" fill="#1a2230" /></g>
    ),
  },
  { name: "Skype", art: <g><circle cx="14" cy="14" r="11" fill="#28a8ea" /><circle cx="26" cy="27" r="10" fill="#0a78d0" /><circle cx="20" cy="20" r="15" fill="#1a94e0" /><text x="20" y="28" textAnchor="middle" fontFamily="Open Sans, sans-serif" fontWeight="700" fontSize="22" fill="#fff">S</text></g> },
  { name: "G app", state: "running", art: <g><rect x="3" y="3" width="34" height="34" rx="6" fill="#fff" /><path d="M10 28c7-3 14-2 20-1v3c-7-1-13 0-20 1z" fill="#f0d91c" /><text x="20" y="26" textAnchor="middle" fontFamily="Liberation Sans, sans-serif" fontWeight="700" fontSize="23" fill="#151515">G</text></g> },
  {
    name: "PowerPoint",
    state: "running",
    art: (
      <g><path d="M20 7h16v26H20z" fill="#f8f1ee" stroke="#cf4a26" strokeWidth="1.500" /><circle cx="27" cy="16" r="5" fill="#cf4a26" /><path d="M22 24h11M22 28h11" stroke="#cf4a26" strokeWidth="2" /><path d="M4 7l18-4v34L4 33z" fill="#d24a24" /><text x="12" y="26" textAnchor="middle" fontFamily="Open Sans, sans-serif" fontWeight="700" fontSize="17" fill="#fff">P</text></g>
    ),
  },
  { name: "Notepad", state: "running", art: <g><path d="M14 6l19-1v27l-6 4z" fill="#d5dde2" /><path d="M13 6l18 2-6 27L5 30z" fill="#7fb9c9" /><path d="M14 7l16 2-3 10-16-3z" fill="#b3dbe3" /><path d="M14 5l18 2" stroke="#6a7880" strokeWidth="2" strokeDasharray="2 1" /></g> },
];

function Taskbar() {
  return (
    <nav aria-label="Taskbar" className="flex h-[59px] shrink-0 border-b-2 border-black bg-[#18212d] font-['Open_Sans',sans-serif] text-[16px] text-[#eef1f5]">
      {taskIcons.map(({ name, state, art }, i) => (
        <button key={name} type="button" aria-label={name} className={`flex h-full shrink-0 flex-col items-center ${i === 0 ? "w-16" : "w-[69px]"} ${state === "active" ? "bg-[#454e5b]" : ""}`}>
          <svg width="40" height="40" viewBox="0 0 40 40" aria-hidden="true" className="mt-2 block">{art}</svg>
          {state && <span className={`mt-auto h-[3px] bg-[#76b9ed] ${state === "active" ? "w-full" : "w-14"}`} />}
        </button>
      ))}
      <div className="ml-auto flex items-center">
        <svg width="20" height="14" viewBox="0 0 20 14" fill="none" aria-hidden="true"><path d="M2 12l8-9 8 9" stroke="#eef1f5" strokeWidth="2" /></svg>
        <svg width="20" height="26" viewBox="0 0 20 26" fill="none" aria-hidden="true" className="ml-4"><path d="M3 7h10v12H3zM13 11l4-2v8l-4-2M5 4c3-3 6-3 9 0M5 22c3 3 6 3 9 0" stroke="#eef1f5" strokeWidth="1.800" /></svg>
        <svg width="24" height="22" viewBox="0 0 24 22" fill="none" aria-hidden="true" className="ml-3"><path d="M8 6h13v11H8M21 9h2v5h-2M3 2v4M7 2v4M1 6h8v3l-3 3H4L1 9zM5 12v5h4" stroke="#eef1f5" strokeWidth="1.600" /><path d="M11 9h7v6h-7z" fill="#eef1f5" /></svg>
        <svg width="26" height="26" viewBox="0 0 26 26" aria-hidden="true" className="ml-2"><path d="M6 19a6 6 0 0 1 0-11 8 8 0 0 1 14-1v12z" fill="#b4b9bf" /><circle cx="18" cy="17" r="7.500" fill="#c8343a" /><path d="M15 14l6 6M21 14l-6 6" stroke="#fff" strokeWidth="2" /></svg>
        <span className="ml-3">ENG</span>
        <div className="ml-[18px] text-center leading-[26px]"><div>19:15</div><div>15-12-2022</div></div>
        <button type="button" aria-label="Notifications" className="ml-6">
          <svg width="24" height="26" viewBox="0 0 24 26" fill="none" aria-hidden="true"><path d="M2 3h20v17h-6l-4 4-4-4H2z" stroke="#eef1f5" strokeWidth="1.800" /></svg>
        </button>
        <span className="mr-[5px] ml-7 h-[57px] w-px bg-[#56606c]" />
      </div>
    </nav>
  );
}

export default function App() {
  return (
    <div className="flex min-h-screen flex-col overflow-hidden bg-white font-['DejaVu_Sans_Condensed','DejaVu_Sans',sans-serif] text-[18px] leading-6 text-[#1f2430]">
      <div className="relative flex flex-1 flex-col border-x-2 border-x-[#c9cfdd] bg-white">
        <header className="relative">
          <div className="h-[2px] bg-[#b5b9ca]" />
          <div className="h-[5px] bg-[#f3f6fc]" />
          <div className="h-[6px] bg-[#d5deea]" />
          <nav aria-label="Menu" className="flex h-[49px] items-center gap-[30px] border-b border-[#d2d4da] bg-linear-to-b from-[#e9ecf7] to-white to-40% pl-[60px] text-[#4b5065]">
            <button type="button" aria-label="System menu" className="-mr-[11px] -ml-[42px] mb-2"><ExitDocIcon /></button>
            {menus.map(([a, u, b]) => (
              <button key={b} type="button">{a}<span className="underline underline-offset-4">{u}</span>{b}</button>
            ))}
          </nav>
          <Toolbar />
          <WindowControls />
        </header>

        <div className="h-3 bg-linear-to-b from-white to-[#edf3fb]" />

        <main className="mr-[19px] ml-[19px] flex flex-1 flex-col border border-[#b6bfce] border-b-[#d5d9e2]">
          <div className="flex h-[49px] items-center border-b border-[#a3b4cd] bg-linear-to-b from-[#d2dee9] to-[#adc2df] pl-4">
            <button type="button" aria-label="Services for object" className="flex h-[30px] w-[59px] items-center rounded-[3px] border border-[#8b8266] bg-linear-to-b from-[#fef5d2] to-[#fbe58f] pl-1">
              <ServicesIcon />
              <span className="ml-2 flex h-full flex-1 items-end border-l border-[#cdbd84] pb-1 pl-[6px]"><svg width="7" height="7" viewBox="0 0 7 7" aria-hidden="true"><path d="M7 0v7H0z" fill="#2a2614" /></svg></span>
            </button>
            <h1 className="ml-[26px] text-[28px] font-bold text-[#0b0f18] italic">Create Purchase Order</h1>
          </div>
          <div className="flex h-[53px] items-center border-t border-b border-t-[#e8eff8] border-b-[#b4bdca] bg-[#cfdbe9] pb-[2px] pl-[22px]">
            <button type="button">Document Overview On</button>
            <span className="mx-[14px] h-6 w-px bg-[#b7c3d3]" />
            <IconBtn label="New"><NewDocIcon /></IconBtn>
            <span className="ml-[14px] flex"><IconBtn label="Other purchase order"><OtherPoIcon /></IconBtn></span>
            <button type="button" className="ml-4">Hold</button>
            <span className="ml-4 flex"><IconBtn label="Check"><CheckConnIcon /></IconBtn></span>
            <span className="mx-[14px] h-6 w-px bg-[#b7c3d3]" />
            <IconBtn label="Messages"><MessagesIcon /></IconBtn>
            <span className="ml-3 flex"><IconBtn label="Help"><InfoIcon /></IconBtn></span>
            <button type="button" className="ml-[14px] flex items-center gap-1"><PersonalIcon />Personal Setting</button>
          </div>

          <div className="flex flex-1 bg-linear-to-b from-[#eaf2fd] to-[#eaf0fb]">
            <div className="flex min-w-0 flex-1 flex-col">
              <div className="flex flex-1 flex-col pt-[11px] pl-[3px]">
                <div className="flex h-8 items-center">
                  <button type="button" aria-label="Purchase order type" className="mr-[2px] grid h-[30px] w-11 place-items-center overflow-hidden border-2 border-[#33363f] bg-[#e4e9f2]"><CartIcon /></button>
                  <Combo id="potype" label="Order type" value="NB Standard PO" className="h-7 w-[234px]" />
                  <input aria-label="Purchase order number" className={`${field} ml-[2px] w-[122px]`} />
                  <label htmlFor="vendor" className={`${under} ml-[11px] h-7 w-[182px] pl-[5px]`}>Vendor</label>
                  <input id="vendor" defaultValue="400000 SK Enterprises" className={`${field} w-[313px]`} />
                  <label htmlFor="docdate" className={`${under} ml-[13px] h-7 w-[123px] pl-[2px]`}>Doc. Date</label>
                  <input id="docdate" defaultValue="16.12.2022" className={`${field} ${mono} mr-[2px] w-[122px]`} />
                  <YBtn label="Date warning"><WarnIcon /></YBtn>
                </div>
                <div className="flex h-8 items-center gap-[6px]"><YBtn label="Expand header"><HeaderOpenIcon /></YBtn>Header</div>
                <div className="flex h-8 items-center"><YBtn label="Collapse items"><FolderClosedIcon /></YBtn></div>
                <div className="pr-[39px]"><ItemTable /></div>
                <ItemActions />
                <div className="mt-[33px] flex h-8 items-center">
                  <YBtn label="Collapse item detail"><FolderClosedIcon /></YBtn>
                  <label htmlFor="item" className={`${under} ml-[3px] h-7 w-[157px] pl-[2px]`}>Item</label>
                  <Combo id="item" label="Item" value="1 [ 10 ] 50000009 , Nitric Acid" className="h-7 w-[459px]" />
                  <div className="ml-[35px] flex gap-[2px]">
                    <YBtn label="Previous item"><svg width="20" height="12" viewBox="0 0 20 12" aria-hidden="true"><path d="M1 10h18L10 2z" fill="#0b0b0b" /></svg></YBtn>
                    <YBtn label="Next item"><svg width="20" height="12" viewBox="0 0 20 12" aria-hidden="true"><path d="M1 2h18l-9 8z" fill="#0b0b0b" /></svg></YBtn>
                  </div>
                </div>
                <TabStrip />
                <ConditionsPanel />
              </div>
            </div>
            <div className="flex w-[22px] shrink-0 flex-col items-center bg-[#f3f6fc]">
              <ArrowBtn d="up" label="Scroll page up" className="h-[25px] w-5" />
              <ArrowBtn d="down" label="Scroll page down" className="h-[28px] w-5" />
              <span className="mt-[2px] grid h-[563px] w-5 shrink-0 place-items-center border border-[#b4bac8] bg-linear-to-r from-[#eef1f8] to-[#dfe4ee]">
                <span className="h-[9px] w-[7px] border-x-2 border-dotted border-[#b2b9c7]" />
              </span>
              <span className="flex-1" />
              <ArrowBtn d="up" label="Page up" className="h-[27px] w-5" />
              <ArrowBtn d="down" label="Page down" className="h-[28px] w-5" />
            </div>
          </div>
        </main>
        <StatusBar />

        <div className="pointer-events-none absolute top-[606px] left-[890px] origin-left -rotate-45 font-['Noto_Sans','Noto_Sans_CJK_SC',sans-serif] text-[25px] whitespace-nowrap text-[#5b5f6870]">
          <div className="-mt-6 leading-[32px]">YESdotnet开发框架<br />www.yesdotnet.com</div>
        </div>
      </div>
      <Taskbar />
    </div>
  );
}
